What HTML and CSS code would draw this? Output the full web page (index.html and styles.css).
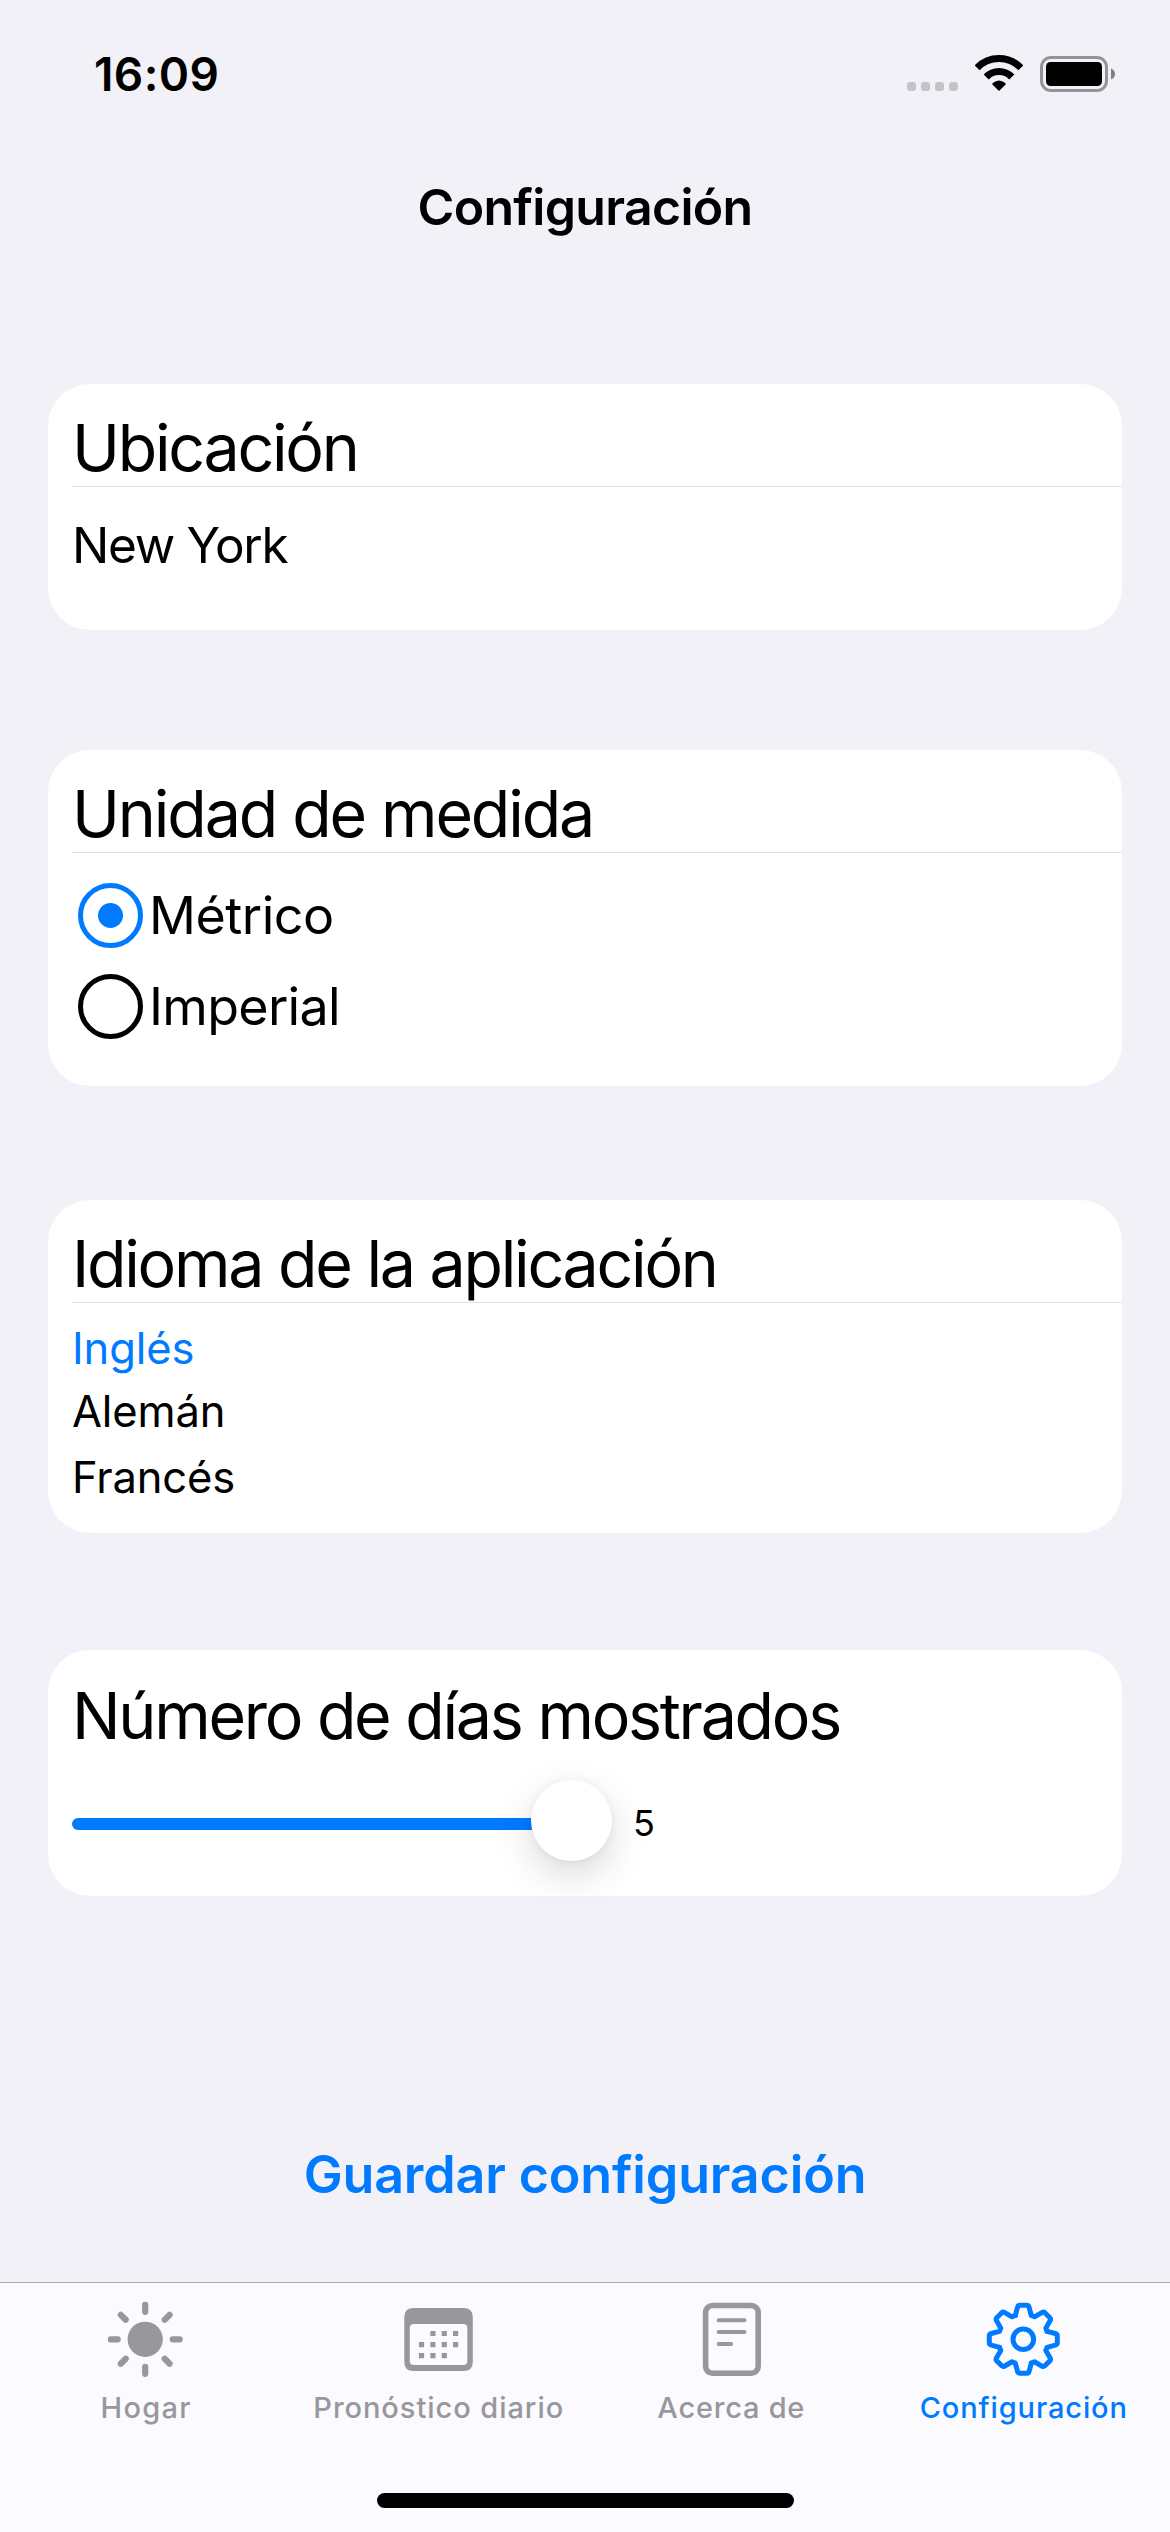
FILE: index.html
```html
<!DOCTYPE html>
<html lang="es">
<head>
<meta charset="utf-8">
<title>Configuración</title>
<link rel="stylesheet" href="styles.css">
</head>
<body>
<div class="screen">
  <div class="status-bar">
    <span class="time">16:09</span>
    <div class="status-icons">
      <div class="signal"><i></i><i></i><i></i><i></i></div>
      <svg class="wifi" width="48" height="36" viewBox="0 0 48 36">
        <g fill="none" stroke="#000" stroke-width="7">
          <path d="M2.1 12.8A30.5 30.5 0 0 1 45.9 12.8"/>
          <path d="M11.2 22A17.5 17.5 0 0 1 36.8 22"/>
        </g>
        <path d="M24 36L17.4 29.5Q17 28.6 17.8 28Q24 23 30.2 28Q31 28.6 30.6 29.5Z"/>
      </svg>
      <svg class="battery" width="76" height="36" viewBox="0 0 76 36">
        <rect x="1.5" y="1.5" width="65" height="33" rx="9.5" fill="none" stroke="#949398" stroke-width="3"/>
        <rect x="6" y="6" width="56" height="24" rx="4.5"/>
        <path d="M71 12.5Q75 14 75 18T71 23.5Z" fill="#7f7e83"/>
      </svg>
    </div>
  </div>

  <h1 class="title">Configuración</h1>

  <main class="settings">
    <section class="card card-location">
      <h2 class="card-title">Ubicación</h2>
      <p class="location">New York</p>
    </section>

    <section class="card card-units">
      <h2 class="card-title">Unidad de medida</h2>
      <div class="radios">
        <div class="radio-row"><span class="radio selected"></span><span class="metric">Métrico</span></div>
        <div class="radio-row"><span class="radio"></span><span class="imperial">Imperial</span></div>
      </div>
    </section>

    <section class="card card-language">
      <h2 class="card-title">Idioma de la aplicación</h2>
      <ul class="languages">
        <li class="active">Inglés</li>
        <li>Alemán</li>
        <li>Francés</li>
      </ul>
    </section>

    <section class="card card-days">
      <h2 class="card-title">Número de días mostrados</h2>
      <div class="slider">
        <span class="track"></span><span class="thumb"></span><span class="value">5</span>
      </div>
    </section>

    <button class="save">Guardar configuración</button>
  </main>

  <nav class="tab-bar">
    <div class="tabs">
      <div class="tab tab-home">
        <svg width="76" height="76" viewBox="0 0 76 76">
          <g transform="translate(37.2 38.3)" fill="currentColor" stroke="currentColor">
            <circle r="17.6" stroke="none"/>
            <path d="M0-34.5V-27.5M0 34.5V27.5M-34.5 0H-27.5M34.5 0H27.5M-24.4-24.4L-19.5-19.5M24.4-24.4L19.5-19.5M-24.4 24.4L-19.5 19.5M24.4 24.4L19.5 19.5" stroke-width="6.2" stroke-linecap="round"/>
          </g>
        </svg>
        <span>Hogar</span>
      </div>
      <div class="tab">
        <svg width="76" height="76" viewBox="0 0 76 76" fill="currentColor">
          <path fill-rule="evenodd" d="M12.5 7H62.5Q71.8 7 71.8 16.3V61Q71.8 70 62.5 70H12.5Q3.3 70 3.3 61V16.3Q3.3 7 12.5 7ZM12.8 23Q8.8 23 8.8 27V60Q8.8 64 12.8 64H62.3Q66.3 64 66.3 60V27Q66.3 23 62.3 23Z"/>
          <path d="M31.9 29.9v5.2M43.3 29.9v5.2M54.6 29.9v5.2M20.5 41v5.2M31.9 41v5.2M43.3 41v5.2M54.6 41v5.2M20.5 52.1v5.2M31.9 52.1v5.2M43.3 52.1v5.2" stroke="currentColor" stroke-width="5.2"/>
        </svg>
        <span>Pronóstico diario</span>
      </div>
      <div class="tab tab-about">
        <svg width="76" height="76" viewBox="0 0 76 76" fill="none" stroke="currentColor">
          <rect x="12.6" y="4.5" width="52.6" height="67.8" rx="7" stroke-width="5.6"/>
          <path d="M25.6 19.3H51.5M25.6 31H51.5M25.6 43H38.2" stroke-width="3.9" stroke-linecap="round"/>
        </svg>
        <span>Acerca de</span>
      </div>
      <div class="tab active">
        <svg width="76" height="76" viewBox="0 0 76 76">
          <defs><path id="teeth" d="M-8-23.8L-5.8-32Q-5.3-34-3.5-34H3.5Q5.3-34 5.8-32L8-23.8L11.17-22.49L18.53-26.73Q20.29-27.79 21.57-26.52L26.52-21.57Q27.79-20.29 26.73-18.53L22.49-11.17L23.8-8"/></defs>
          <g transform="translate(37.3 38.3)" fill="none" stroke="currentColor" stroke-width="5" stroke-linecap="round" stroke-linejoin="round">
            <use href="#teeth"/>
            <use href="#teeth" transform="rotate(90)"/>
            <use href="#teeth" transform="rotate(180)"/>
            <use href="#teeth" transform="rotate(270)"/>
            <circle r="10.3"/>
          </g>
        </svg>
        <span>Configuración</span>
      </div>
    </div>
    <div class="home-indicator"></div>
  </nav>
</div>
</body>
</html>
```
FILE: styles.css
```css
* { box-sizing: border-box; margin: 0; padding: 0; }

body {
  font-family: "Inter", "Liberation Sans", sans-serif;
  color: #000;
  background: #f2f1f7;
}

.screen {
  width: 1170px;
  height: 2532px;
  display: flex;
  flex-direction: column;
}

.status-bar {
  height: 148px;
  padding: 0 54px 0 94px;
  display: flex;
  justify-content: space-between;
  align-items: center;
}

.time { font-size: 46px; font-weight: 600; letter-spacing: 0.4px; line-height: 56px; }

.status-icons { height: 36px; display: flex; align-items: flex-end; }
.signal { display: flex; gap: 5px; margin: 0 17px 1px 0; }
.signal i { width: 9px; height: 9px; border-radius: 3px; background: #c4c3c9; }
.wifi { margin: 0 17px 1px 0; }

.title {
  height: 118px;
  line-height: 118px;
  text-align: center;
  font-size: 50px;
  font-weight: 600;
  letter-spacing: -0.69px;
}

.settings {
  flex: 1;
  padding: 118px 48px 0;
  display: flex;
  flex-direction: column;
}

.card {
  background: #fff;
  border-radius: 42px;
  padding: 25px 0 0 24px;
}

.card-location { height: 246px; }
.card-units { height: 336px; margin-top: 120px; }
.card-language { height: 333px; margin-top: 114px; }
.card-days { height: 246px; margin-top: 117px; padding-top: 27px; }

.card-title {
  height: 78px;
  line-height: 78px;
  border-bottom: 1px solid #e0e0e2;
  font-size: 64.5px;
  font-weight: 400;
  letter-spacing: -2.28px;
  white-space: nowrap;
}
.card-units .card-title { letter-spacing: -2.13px; }
.card-days .card-title { height: 77px; border-bottom: 0; }

.location { margin-top: 28px; line-height: 60px; font-size: 49.5px; letter-spacing: -1.3px; }

.radios { padding: 17px 0 0 6px; }
.radio-row {
  height: 91px;
  display: flex;
  align-items: center;
  gap: 6px;
  font-size: 52px;
  letter-spacing: -0.5px;
}
.imperial { letter-spacing: -0.69px; }
.radio {
  width: 65px;
  height: 65px;
  border: 5px solid #000;
  border-radius: 50%;
  display: flex;
  align-items: center;
  justify-content: center;
}
.radio.selected { border-color: #007aff; }
.radio.selected::before {
  content: "";
  width: 25px;
  height: 25px;
  border-radius: 50%;
  background: #007aff;
}

.languages { list-style: none; padding-top: 14px; font-size: 43.5px; }
.languages li { line-height: 64px; height: 64px; letter-spacing: -0.15px; }
.languages li:last-child { line-height: 68px; height: 68px; }
.languages .active { color: #007aff; line-height: 62px; height: 62px; letter-spacing: -0.1px; }

.slider { height: 81px; margin-top: 26px; display: flex; align-items: center; }
.track { width: 464px; height: 12px; margin: 7px -5px 0 0; border-radius: 6px 0 0 6px; background: #007aff; }
.thumb {
  width: 81px;
  height: 81px;
  border-radius: 50%;
  background: #fff;
  box-shadow: 0 1px 8px rgba(0, 0, 0, 0.06), 0 14px 38px rgba(0, 0, 0, 0.15);
}
.value { margin: 5px 0 0 21px; font-size: 36px; line-height: 44px; }

.save {
  align-self: center;
  margin-top: 247px;
  border: 0;
  background: none;
  color: #007aff;
  font: 600 52px/64px "Inter", "Liberation Sans", sans-serif;
  letter-spacing: -0.15px;
  white-space: nowrap;
}

.tab-bar {
  height: 250px;
  border-top: 1px solid #a9a8af;
  background: #fbfafe;
  padding-top: 18px;
}
.tabs { display: grid; grid-template-columns: repeat(4, 1fr); }
.tab {
  display: flex;
  flex-direction: column;
  align-items: center;
  gap: 12px;
  color: #98979c;
  font-size: 29px;
  font-weight: 500;
  line-height: 37px;
  letter-spacing: 0.95px;
  white-space: nowrap;
}
.tab-home { letter-spacing: 1.3px; }
.tab-about { letter-spacing: 0.77px; }
.tab.active { color: #007aff; letter-spacing: 0.89px; }

.home-indicator {
  width: 417px;
  height: 15px;
  margin: 67px auto 0;
  border-radius: 8px;
  background: #000;
}
```
